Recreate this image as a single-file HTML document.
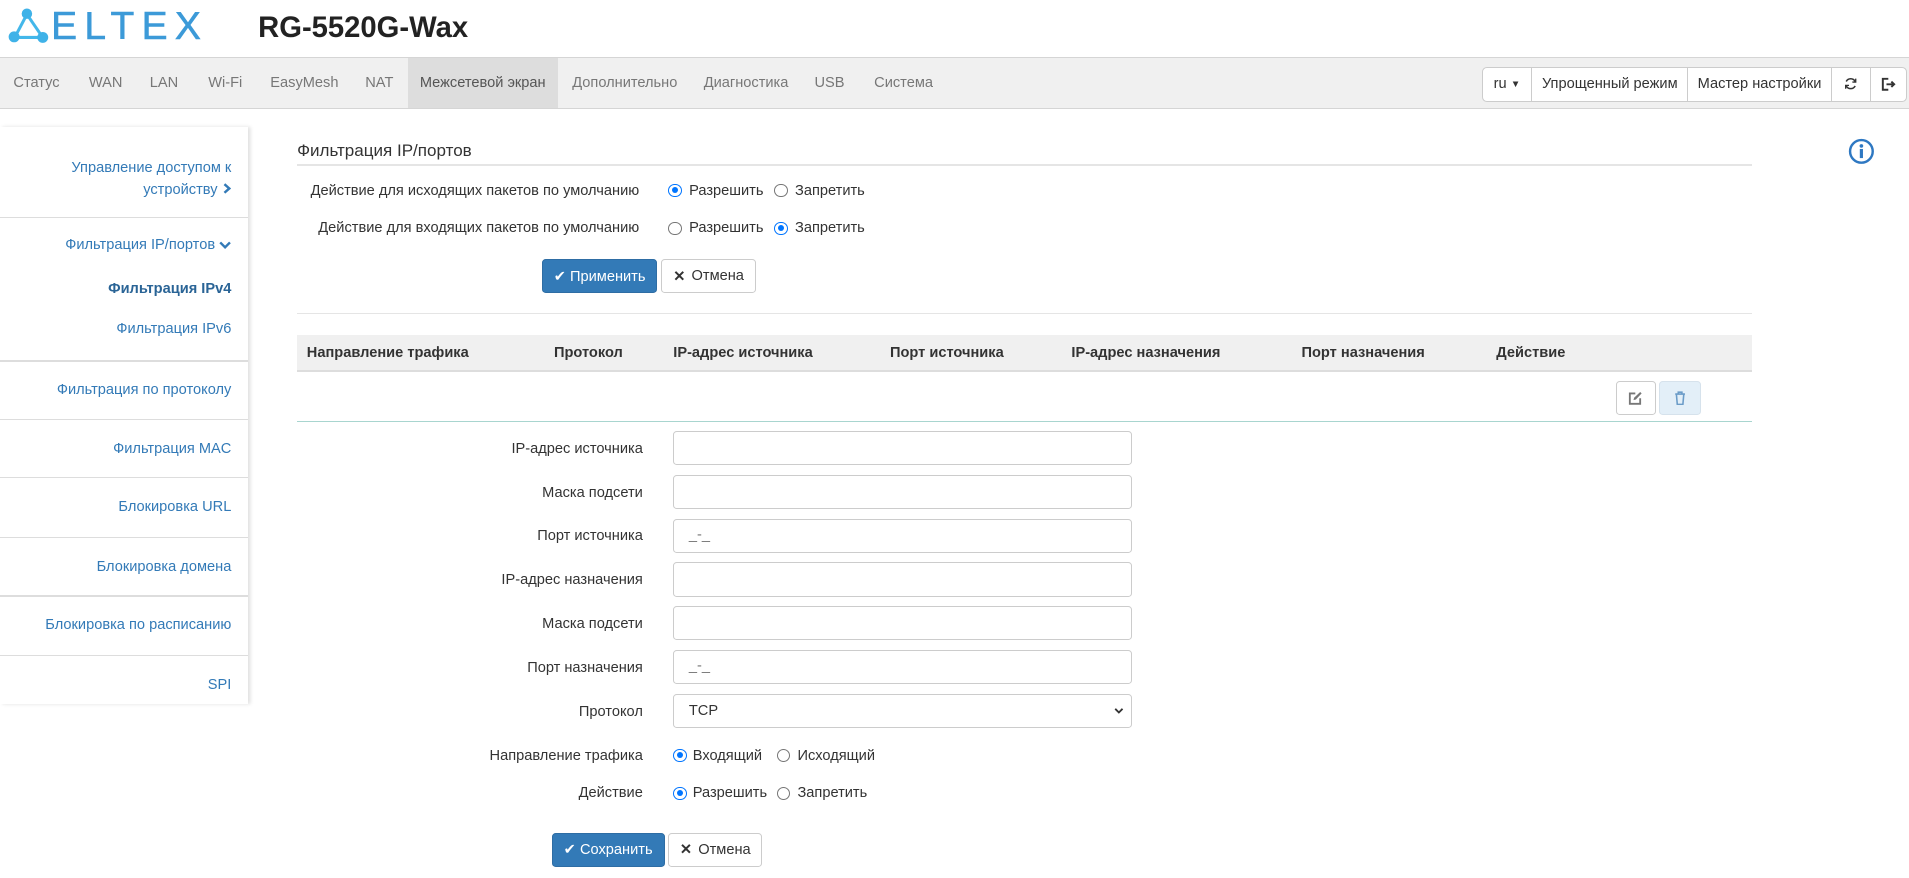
<!DOCTYPE html>
<html><head><meta charset="utf-8">
<style>
html{zoom:1.2175}
body{margin:0;width:1568px;height:721px;overflow:hidden;background:#fff;font-family:"Liberation Sans",Arial,sans-serif;font-size:12px;color:#333;position:relative}
.a{position:absolute;white-space:nowrap}
.nav{position:absolute;left:0;top:47px;width:1568px;height:41px;background:#f0f0f0;border-top:1px solid #d5d5d5;border-bottom:1px solid #d5d5d5}
.nav>span{position:absolute;top:1px;line-height:41px;color:#777}
.grp{position:absolute;top:7px;left:1217px;height:27px;display:flex;border:1px solid #ccc;border-radius:4px;background:#fff;white-space:nowrap}
.grp div{border-left:1px solid #ccc;height:27px;color:#333;display:flex;align-items:center;justify-content:center;box-sizing:border-box;white-space:nowrap}
.grp div:first-child{border-left:0}
.side{position:absolute;left:0;top:104px;width:204px;height:474px;box-shadow:2px 0 3px rgba(0,0,0,.12)}
.si{position:absolute;right:14px;color:#337ab7;text-align:right;white-space:nowrap}
.sep{position:absolute;left:0;width:204px;height:1px;background:#ddd}
.lbl{position:absolute;text-align:right;color:#333;white-space:nowrap}
.rad{position:absolute;width:11px;height:11px;border:1px solid #767676;border-radius:50%;box-sizing:border-box;background:#fff}
.rad.on{border:1px solid #0075ff}
.rad.on:after{content:"";position:absolute;left:2px;top:2px;width:5px;height:5px;border-radius:50%;background:#0075ff}
.btnp{position:absolute;background:#337ab7;border:1px solid #2e6da4;border-radius:3px;color:#fff;box-sizing:border-box;display:flex;align-items:center;justify-content:center;gap:4px}
.btnd{position:absolute;background:#fff;border:1px solid #ccc;border-radius:3px;color:#333;box-sizing:border-box;display:flex;align-items:center;justify-content:center;gap:5px}
.inp{position:absolute;left:553px;width:377px;height:28px;border:1px solid #ccc;border-radius:3px;box-sizing:border-box;color:#777;padding-left:12px;line-height:26px}
.th{position:absolute;top:276px;line-height:29px;font-weight:bold;color:#333}
</style></head><body>
<svg class="a" style="left:4px;top:6px" width="40" height="32" viewBox="0 0 40 32">
<line x1="18" y1="6" x2="8" y2="25" stroke="#43b7ea" stroke-width="2.5"/>
<line x1="18" y1="6" x2="31" y2="25" stroke="#43b7ea" stroke-width="2.5"/>
<line x1="8" y1="25" x2="31" y2="25" stroke="#43b7ea" stroke-width="2.5"/>
<circle cx="18" cy="5.5" r="4.3" fill="#3fb2e8"/><circle cx="7.5" cy="24.5" r="4.5" fill="#3fb2e8"/><circle cx="31" cy="25" r="4.5" fill="#3fb2e8"/>
</svg>
<div class="a" style="left:42px;top:5px;font-size:32px;letter-spacing:6px;color:#3c9ad8;line-height:34px;-webkit-text-stroke:0.5px #3c9ad8">ELTEX</div>
<div class="a" style="left:212px;top:9px;font-size:24px;font-weight:bold;color:#222;line-height:28px">RG-5520G-Wax</div>

<div class="nav">
<span style="left:11px">Статус</span><span style="left:73px">WAN</span><span style="left:123px">LAN</span><span style="left:171px">Wi-Fi</span><span style="left:222px">EasyMesh</span><span style="left:300px">NAT</span>
<span style="left:335px;top:0;height:41px;line-height:42px;width:123px;background:#ddd;text-align:center;color:#555">Межсетевой экран</span>
<span style="left:470px">Дополнительно</span><span style="left:578px">Диагностика</span><span style="left:669px">USB</span><span style="left:718px">Система</span>
<div class="grp">
<div style="width:40px">ru&nbsp;<span style="font-size:8px;color:#333">▼</span></div>
<div style="width:128px">Упрощенный режим</div>
<div style="width:118px">Мастер настройки</div>
<div style="width:32px"><svg width="11" height="11" viewBox="0 0 12 12"><path d="M10 4A4.5 4.5 0 0 0 2 4M2 8a4.5 4.5 0 0 0 8 0" fill="none" stroke="#333" stroke-width="1.4"/><path d="M10.5 1.5v3h-3M1.5 10.5v-3h3" fill="none" stroke="#333" stroke-width="1.2"/></svg></div>
<div style="width:30px"><svg width="12" height="12" viewBox="0 0 12 12"><path d="M6 1.5H1.5v9H6" fill="none" stroke="#333" stroke-width="1.6"/><path d="M4.5 6h6M8.5 3.8L10.8 6 8.5 8.2" fill="none" stroke="#333" stroke-width="1.6"/></svg></div>
</div>
</div>

<div class="side">
<div class="si" style="top:26px;line-height:18px">Управление доступом к<br>устройству <svg width="8" height="9" viewBox="0 0 8 9"><path d="M2 1l4 3.5L2 8" fill="none" stroke="#337ab7" stroke-width="2"/></svg></div>
<div class="sep" style="top:74px"></div>
<div class="si" style="top:91px">Фильтрация IP/портов <svg width="10" height="8" viewBox="0 0 10 8"><path d="M1 2l4 4 4-4" fill="none" stroke="#337ab7" stroke-width="2"/></svg></div>
<div class="si" style="top:127px;font-weight:bold;color:#2a6496">Фильтрация IPv4</div>
<div class="si" style="top:160px">Фильтрация IPv6</div>
<div class="sep" style="top:192px"></div>
<div class="si" style="top:210px">Фильтрация по протоколу</div>
<div class="sep" style="top:240px"></div>
<div class="si" style="top:258px">Фильтрация MAC</div>
<div class="sep" style="top:288px"></div>
<div class="si" style="top:306px">Блокировка URL</div>
<div class="sep" style="top:337px"></div>
<div class="si" style="top:355px">Блокировка домена</div>
<div class="sep" style="top:385px"></div>
<div class="si" style="top:403px">Блокировка по расписанию</div>
<div class="sep" style="top:434px"></div>
<div class="si" style="top:452px">SPI</div>
</div>

<div class="a" style="left:244px;top:116px;font-size:14px;color:#333">Фильтрация IP/портов</div>
<div class="a" style="left:244px;top:135px;width:1195px;height:1px;background:#e5e5e5"></div>
<svg class="a" style="left:1518px;top:113px" width="22" height="22" viewBox="0 0 22 22"><circle cx="11" cy="11" r="9.3" fill="none" stroke="#2e78c2" stroke-width="2"/><circle cx="11" cy="6.5" r="1.5" fill="#2e78c2"/><rect x="9.7" y="9" width="2.6" height="7.5" fill="#2e78c2"/></svg>

<div class="lbl" style="right:1043px;top:150px">Действие для исходящих пакетов по умолчанию</div>
<div class="rad on" style="left:549px;top:151px"></div><div class="a" style="left:566px;top:150px">Разрешить</div>
<div class="rad" style="left:636px;top:151px"></div><div class="a" style="left:653px;top:150px">Запретить</div>
<div class="lbl" style="right:1043px;top:181px">Действие для входящих пакетов по умолчанию</div>
<div class="rad" style="left:549px;top:182px"></div><div class="a" style="left:566px;top:181px">Разрешить</div>
<div class="rad on" style="left:636px;top:182px"></div><div class="a" style="left:653px;top:181px">Запретить</div>
<div class="btnp" style="left:445px;top:213px;width:95px;height:28px">✔ Применить</div>
<div class="btnd" style="left:543px;top:213px;width:78px;height:28px"><b>✕</b>Отмена</div>
<div class="a" style="left:244px;top:257px;width:1195px;height:1px;background:#e5e5e5"></div>

<div class="a" style="left:244px;top:275px;width:1195px;height:29px;background:#f0f0f0;border-bottom:2px solid #ddd"></div>
<div class="th" style="left:252px">Направление трафика</div>
<div class="th" style="left:455px">Протокол</div>
<div class="th" style="left:553px">IP-адрес источника</div>
<div class="th" style="left:731px">Порт источника</div>
<div class="th" style="left:880px">IP-адрес назначения</div>
<div class="th" style="left:1069px">Порт назначения</div>
<div class="th" style="left:1229px">Действие</div>
<div class="btnd" style="left:1327px;top:313px;width:33px;height:28px"><svg width="12" height="12" viewBox="0 0 12 12"><path d="M6 2H1.5v8.5H10V6" fill="none" stroke="#777" stroke-width="1.5"/><path d="M4.5 7.5L5 5.5 10 0.8 11.2 2 6.5 7z" fill="#777"/></svg></div>
<div class="btnd" style="left:1363px;top:313px;width:34px;height:28px;background:#e3eff8;border-color:#d6e2ec"><svg width="10" height="12" viewBox="0 0 10 12"><path d="M1 2.5h8M3.5 2.5V1h3v1.5M2 3l.7 8h4.6L8 3" fill="none" stroke="#6b9cc8" stroke-width="1.3"/></svg></div>
<div class="a" style="left:244px;top:346px;width:1195px;height:1px;background:#a8d5cf"></div>

<div class="lbl" style="right:1040px;top:362px">IP-адрес источника</div><div class="inp" style="top:354px"></div>
<div class="lbl" style="right:1040px;top:398px">Маска подсети</div><div class="inp" style="top:390px"></div>
<div class="lbl" style="right:1040px;top:434px">Порт источника</div><div class="inp" style="top:426px">_-_</div>
<div class="lbl" style="right:1040px;top:470px">IP-адрес назначения</div><div class="inp" style="top:462px"></div>
<div class="lbl" style="right:1040px;top:506px">Маска подсети</div><div class="inp" style="top:498px"></div>
<div class="lbl" style="right:1040px;top:542px">Порт назначения</div><div class="inp" style="top:534px">_-_</div>
<div class="lbl" style="right:1040px;top:578px">Протокол</div><div class="inp" style="top:570px;color:#333;line-height:27px">TCP<svg style="position:absolute;right:6px;top:10px" width="8" height="6" viewBox="0 0 10 8"><path d="M1 2l4 4 4-4" fill="none" stroke="#333" stroke-width="2"/></svg></div>
<div class="lbl" style="right:1040px;top:614px">Направление трафика</div>
<div class="rad on" style="left:553px;top:615px"></div><div class="a" style="left:569px;top:614px">Входящий</div>
<div class="rad" style="left:638px;top:615px"></div><div class="a" style="left:655px;top:614px">Исходящий</div>
<div class="lbl" style="right:1040px;top:645px">Действие</div>
<div class="rad on" style="left:553px;top:646px"></div><div class="a" style="left:569px;top:645px">Разрешить</div>
<div class="rad" style="left:638px;top:646px"></div><div class="a" style="left:655px;top:645px">Запретить</div>
<div class="btnp" style="left:453px;top:684px;width:93px;height:28px">✔ Сохранить</div>
<div class="btnd" style="left:549px;top:684px;width:77px;height:28px"><b>✕</b>Отмена</div>
</body></html>
